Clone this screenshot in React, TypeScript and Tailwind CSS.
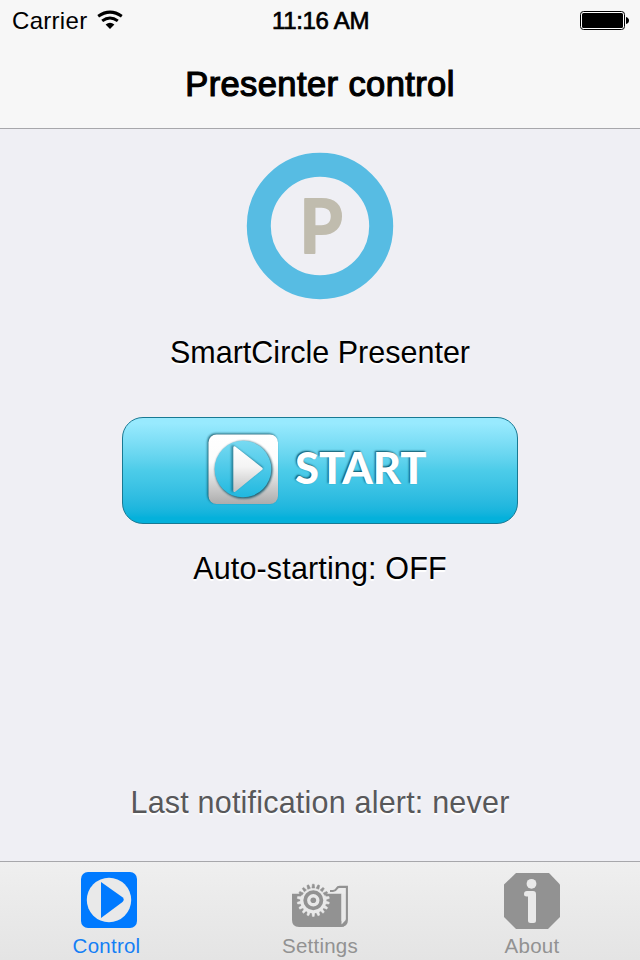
import React from "react";

function StatusBar() {
  return (
    <div className="flex h-10 items-center justify-between pl-3 pr-[11px] text-[24px] leading-10 text-black">
      <div className="flex w-[220px] items-center">
        <span className="relative top-[1px] tracking-[0.3px]">Carrier</span>
        <svg className="ml-[10px]" width="26" height="20" viewBox="0 0 26 20" fill="none" stroke="#000">
          <path d="M1.2 6.2 Q13 -2 24.8 6.2" strokeWidth="3" />
          <path d="M5.2 10.9 Q13 5 20.8 10.9" strokeWidth="3" />
          <path d="M8.6 14.6 Q13 10.8 17.4 14.6 L13 18.9Z" fill="#000" stroke="none" />
        </svg>
      </div>
      <span className="relative top-[1px] whitespace-nowrap tracking-[-0.3px] [-webkit-text-stroke:0.7px_#000]">11:16 AM</span>
      <div className="flex w-[220px] justify-end">
        <svg width="49" height="19" viewBox="0 0 49 19">
          <rect x="0.5" y="0.5" width="44" height="18" rx="3" fill="#fff" stroke="#000" />
          <rect x="2" y="2" width="41" height="15" rx="1.5" fill="#000" />
          <path d="M46 6 Q49 7 49 9.5 Q49 12 46 13Z" fill="#000" />
        </svg>
      </div>
    </div>
  );
}

function Logo() {
  return (
    <svg width="148" height="148" viewBox="0 0 148 148" className="block">
      <circle cx="74" cy="74" r="61.2" fill="none" stroke="#57bce3" strokeWidth="24" />
      <text
        transform="translate(53.6 100.6) scale(0.93 1)"
        fontFamily="Lato, sans-serif"
        fontWeight="700"
        fontSize="75"
        fill="#c0bcae"
        stroke="#c0bcae"
        strokeWidth="2"
        strokeLinejoin="round"
      >
        P
      </text>
    </svg>
  );
}

function PlayBadge() {
  return (
    <svg width="76" height="76" viewBox="0 0 76 76" className="block">
      <defs>
        <linearGradient id="plate" x1="0" y1="0" x2="0" y2="1">
          <stop offset="0" stopColor="#fff" />
          <stop offset="0.4" stopColor="#fcfcfc" />
          <stop offset="1" stopColor="#acacac" />
        </linearGradient>
        <linearGradient id="disc" x1="0" y1="0" x2="0" y2="1">
          <stop offset="0" stopColor="#78daf2" />
          <stop offset="1" stopColor="#20b8df" />
        </linearGradient>
        <linearGradient id="arrow" x1="0" y1="0" x2="0" y2="1">
          <stop offset="0" stopColor="#fff" />
          <stop offset="0.45" stopColor="#f4f4f4" />
          <stop offset="1" stopColor="#c4c4c4" />
        </linearGradient>
        <filter id="soft" x="-20%" y="-20%" width="140%" height="140%">
          <feGaussianBlur stdDeviation="1.1" />
        </filter>
      </defs>
      <rect x="2.5" y="2.5" width="69.5" height="69.5" rx="8" fill="#073f50" opacity="0.8" filter="url(#soft)" />
      <rect x="3.5" y="3.5" width="69.5" height="69.5" rx="8" fill="url(#plate)" />
      <circle cx="38.8" cy="38.8" r="28.8" fill="#064c60" opacity="0.85" filter="url(#soft)" />
      <circle cx="38" cy="38" r="28.3" fill="url(#disc)" />
      <path d="M27.5 15 L57 36.8 L27.5 60Z" fill="#084456" stroke="#084456" strokeWidth="2" strokeLinejoin="round" opacity="0.6" filter="url(#soft)" />
      <path d="M29.5 16.5 L56.5 37.7 L29.5 59.8Z" fill="url(#arrow)" stroke="url(#arrow)" strokeWidth="2.4" strokeLinejoin="round" />
    </svg>
  );
}

function ControlIcon() {
  return (
    <svg width="56" height="56" viewBox="0 0 56 56">
      <rect width="56" height="56" rx="7" fill="#007aff" />
      <circle cx="28" cy="28" r="22.2" fill="#e9e9e9" />
      <path d="M20 10 L41.5 25.3 Q44 27.6 41.5 30 L20 46Z" fill="#007aff" />
    </svg>
  );
}

const TEETH = Array.from({ length: 18 }, (_, i) => i * 20);

function SettingsIcon() {
  return (
    <svg width="58" height="46" viewBox="0 0 58 46">
      <path d="M1 10.7 H50.5 V38 L55 36 Q57 44 49.5 44 H8 Q1 44 1 37Z" fill="#929292" />
      <path d="M50.5 10.7 H54.8 V37 L50.5 41.5Z" fill="#e9e9e9" />
      <path
        d="M39 8 H42 Q44.4 8 45.6 5.8 Q46.6 3.9 48.5 3.9 H55.9 V37 Q55.9 42.9 49.5 42.9"
        fill="none"
        stroke="#929292"
        strokeWidth="2.1"
      />
      <circle cx="22.3" cy="17.3" r="13.1" fill="#e9e9e9" />
      {TEETH.map((angle) => (
        <path
          key={angle}
          d="M20.9 5 L21.4 1.2 H23.2 L23.7 5Z"
          transform={`rotate(${angle} 22.3 17.3)`}
          fill={angle > 70 && angle < 290 ? "#e9e9e9" : "#929292"}
          stroke={angle > 70 && angle < 290 ? "#e9e9e9" : "#929292"}
          strokeWidth="0.5"
          strokeLinejoin="round"
        />
      ))}
      <circle cx="22.3" cy="17.3" r="8.1" fill="none" stroke="#929292" strokeWidth="3.8" />
      <circle cx="22.3" cy="17.3" r="2.8" fill="#929292" />
    </svg>
  );
}

function AboutIcon() {
  return (
    <svg width="56" height="56" viewBox="0 0 56 56">
      <path d="M12 0 H45 L56 11.5 V44 L44 56 H12 L0 44 V11.5Z" fill="#929292" />
      <circle cx="27.5" cy="10.8" r="4.9" fill="#e9e9e9" />
      <path d="M23 18 H29 Q32 18 32 21 V47.5 Q32 50 29.5 50 H26.5 Q24 50 24 47.5 V23.5 H22.5 Q20 23.5 20 21 Q20 18 23 18Z" fill="#e9e9e9" />
    </svg>
  );
}

export default function App() {
  return (
    <div className="flex h-[960px] w-[640px] flex-col overflow-hidden bg-[#efeff4] font-['Liberation_Sans',Arial,sans-serif]">
      <header className="h-[129px] border-b border-[#a7a7ab] bg-[#f7f7f7]">
        <StatusBar />
        <h1 className="text-center text-[34.5px] leading-[88px] tracking-[0.4px] text-black [-webkit-text-stroke:1.2px_#000]">
          Presenter control
        </h1>
      </header>

      <main className="flex h-[732px] flex-col items-center">
        <div className="mt-[23px]">
          <Logo />
        </div>
        <p className="mt-8 text-[30.5px] leading-10 text-black [text-shadow:0_2px_1px_#fff]">
          SmartCircle Presenter
        </p>
        <button className="mt-[45px] flex h-[107px] w-[396px] rounded-[21px] border border-[#187993] bg-linear-to-b from-[#98eafe] from-5% via-[#4ccce9] via-50% to-[#04b1db] to-95% pl-[82px] pt-[12.5px]">
          <PlayBadge />
          <span className="ml-[14px] mt-[15px] font-['Lato',sans-serif] text-[43.5px] font-black leading-none text-white [text-shadow:-1px_-1px_2px_#064c60]">
            START
          </span>
        </button>
        <p className="mt-6 text-[30.5px] leading-10 tracking-[0.15px] text-black [text-shadow:0_2px_1px_#fff]">
          Auto-starting: OFF
        </p>
        <p className="mt-[194px] text-[30.5px] leading-10 tracking-[0.2px] text-[#58585a] [text-shadow:0_2px_1px_#fff]">
          Last notification alert: never
        </p>
      </main>

      <nav className="grid h-[99px] grid-cols-[218px_204px_218px] border-t border-[#a7a7ab] bg-linear-to-b from-[#efefef] to-[#e4e4e4] text-[20.5px] leading-6 text-[#929292]">
        <div className="flex flex-col items-center pt-[10px] text-[#147ff5]">
          <ControlIcon />
          <span className="mt-[6px] mr-[5px] tracking-[0.25px]">Control</span>
        </div>
        <div className="flex flex-col items-center pt-[21px]">
          <SettingsIcon />
          <span className="mt-[5px] tracking-[0.25px]">Settings</span>
        </div>
        <div className="flex flex-col items-center pl-[2px] pt-[11px]">
          <AboutIcon />
          <span className="mt-[5px] tracking-[0.3px]">About</span>
        </div>
      </nav>
    </div>
  );
}
